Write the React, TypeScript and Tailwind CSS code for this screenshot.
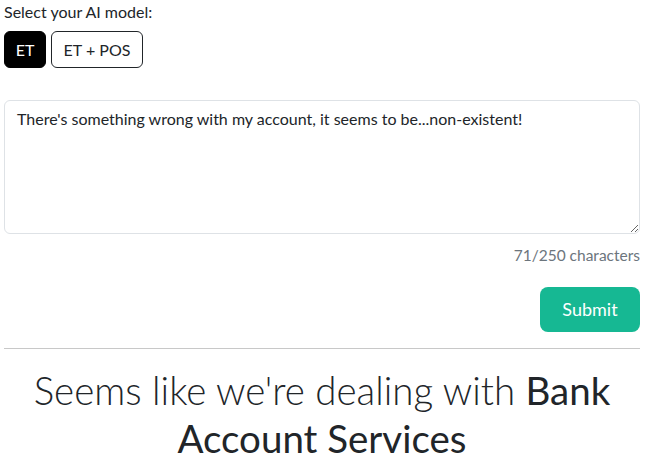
import React from "react";

export default function App() {
  const text =
    "There's something wrong with my account, it seems to be...non-existent!";
  return (
    <div
      className="w-[649px] h-[461px] overflow-hidden bg-white text-[#212529]"
      style={{ fontFamily: '"Segoe UI", Lato, "Noto Sans", sans-serif' }}
    >
      <div className="w-[636px] ml-[4px]">
        <div className="text-[16px] leading-[24px]">Select your AI model:</div>
        <div className="flex gap-[5px] mt-[7px]">
          <button className="h-[37px] w-[42px] rounded-[6px] bg-black text-white border border-black text-[16px]">
            ET
          </button>
          <button className="h-[37px] w-[92px] rounded-[6px] bg-white text-[#212529] border border-[#212529] text-[16px]">
            ET + POS
          </button>
        </div>
        <textarea
          className="block w-full h-[134px] mt-[32px] border border-[#dee2e6] rounded-[6px] px-[12px] py-[6px] text-[16px] leading-[24px] text-[#212529] resize-y outline-none"
          defaultValue={text}
          style={{ fontFamily: "inherit" }}
        />
        <div className="text-right text-[15.5px] leading-[24px] text-[#6c757d] mt-[9px]">
          71/250 characters
        </div>
        <div className="flex justify-end mt-[20px]">
          <button className="h-[45px] w-[100px] rounded-[8px] bg-[#16b893] text-white text-[18px]">
            Submit
          </button>
        </div>
        <hr className="mt-[16px] border-t border-[#c8c8c8]" />
        <h1 className="text-center text-[38.5px] leading-[48px] mt-[17px] font-light">
          Seems like we're dealing with <b className="font-normal">Bank Account Services</b>
        </h1>
      </div>
    </div>
  );
}
